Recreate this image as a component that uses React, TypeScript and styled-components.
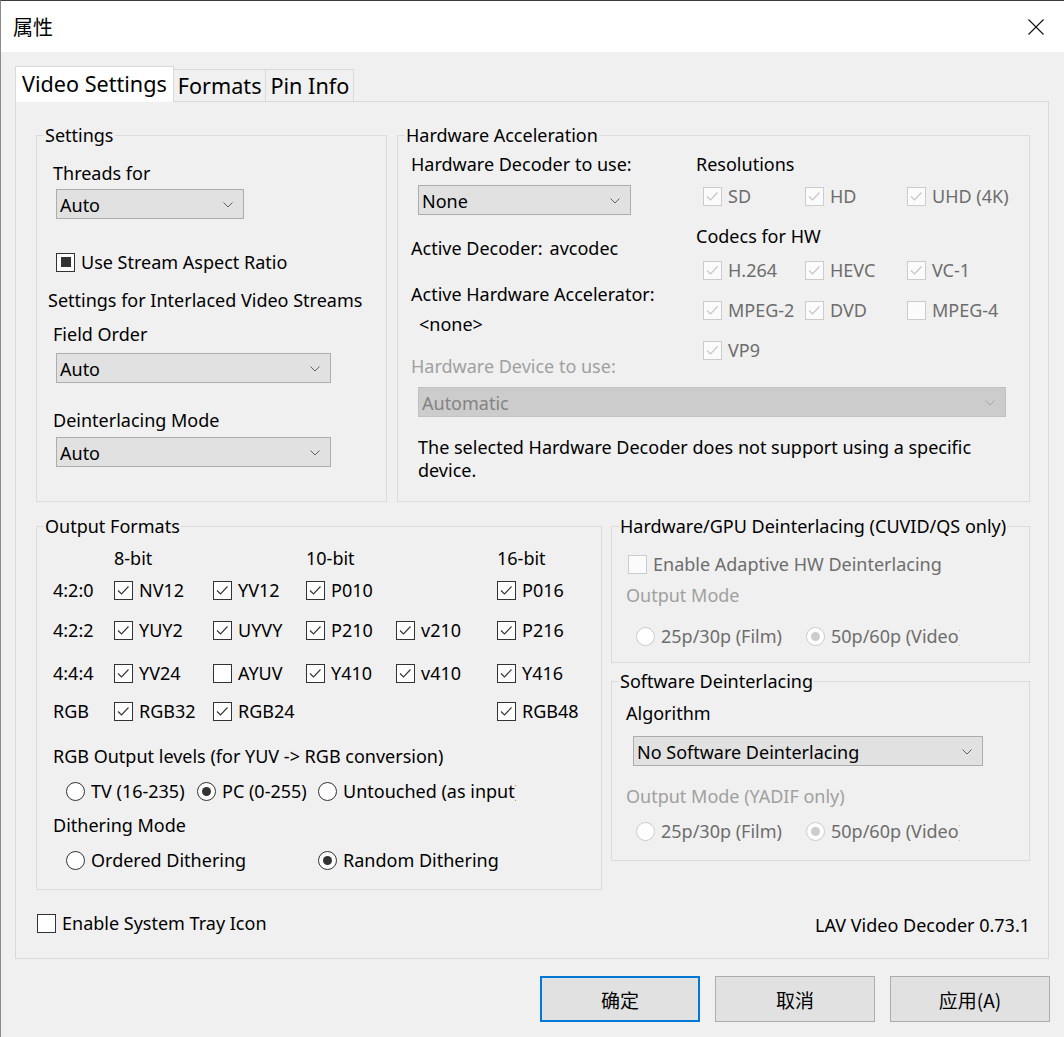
import React from "react";
import styled, { createGlobalStyle } from "styled-components";

const FONT = `"Noto Sans", "Noto Sans CJK SC", sans-serif`;
const CJK = `"Noto Sans CJK SC", "Noto Sans", sans-serif`;

const GlobalStyle = createGlobalStyle`
  * { box-sizing: border-box; }
  html, body { margin: 0; padding: 0; background: #f0f0f0; }
  body { font-family: ${FONT}; font-size: 18px; color: #000; }
`;

/* ---------- window chrome ---------- */
const Window = styled.div`
  width: 1064px;
  height: 1037px;
  display: flex;
  flex-direction: column;
  background: #f0f0f0;
  border-top: 1px solid #3c3c3c;
  border-left: 1px solid #8a8a8a;
  overflow: hidden;
`;

const TitleBar = styled.header`
  height: 51px;
  flex: none;
  background: #fff;
  display: flex;
  align-items: center;
  justify-content: space-between;
  padding: 0 20px 0 12px;
`;

const Title = styled.span`
  font-family: ${CJK};
  font-size: 20px;
  line-height: 24px;
`;

const Body = styled.div`
  flex: 1;
  display: flex;
  flex-direction: column;
  padding: 14px 14px 0 14px;
`;

/* ---------- tabs ---------- */
const TabStrip = styled.div`
  display: flex;
  align-items: flex-end;
  height: 36px;
  margin-bottom: -1px;
  position: relative;
  z-index: 1;
`;

const Tab = styled.div<{ $active?: boolean }>`
  display: flex;
  align-items: center;
  height: ${(p) => (p.$active ? 36 : 33)}px;
  padding: ${(p) => (p.$active ? "0 6px 3px" : "0 4px 1px")};
  margin-left: ${(p) => (p.$active ? 0 : -1)}px;
  font-size: 21.6px;
  background: ${(p) => (p.$active ? "#ffffff" : "#f0f0f0")};
  border: 1px solid #d9d9d9;
  border-bottom: ${(p) => (p.$active ? "none" : "1px solid #d9d9d9")};
  white-space: nowrap;
`;

const Panel = styled.div`
  width: 1034px;
  height: 858px;
  flex: none;
  border: 1px solid #d9d9d9;
  background: #f0f0f0;
  display: flex;
  flex-direction: column;
  padding: 21px 18px 0 20px;
`;

const Row = styled.div<{ $mt?: number; $gap: number }>`
  display: flex;
  align-items: flex-start;
  gap: ${(p) => p.$gap}px;
  margin-top: ${(p) => p.$mt ?? 0}px;
`;

const Column = styled.div<{ $gap: number }>`
  display: flex;
  flex-direction: column;
  gap: ${(p) => p.$gap}px;
`;

/* ---------- group boxes ---------- */
const GroupBox = styled.fieldset<{ $w: number; $h: number }>`
  width: ${(p) => p.$w}px;
  height: ${(p) => p.$h}px;
  flex: none;
  margin: 0;
  padding: 0;
  min-width: 0;
  border: 1px solid #dcdcdc;
  display: flex;
  flex-direction: column;
`;

const Legend = styled.legend`
  margin-left: 7px;
  padding: 0 1px;
  line-height: 24px;
  white-space: nowrap;
`;

const GroupBody = styled.div<{ $pl: number }>`
  display: flex;
  flex-direction: column;
  align-items: flex-start;
  padding-left: ${(p) => p.$pl}px;
`;

type Tone = "normal" | "muted" | "faint";
const toneColor = (t?: Tone) =>
  t === "muted" ? "#6d6d6d" : t === "faint" ? "#a0a0a0" : "#000000";

const Label = styled.div<{ $mt?: number; $ml?: number; $tone?: Tone }>`
  margin-top: ${(p) => p.$mt ?? 0}px;
  margin-left: ${(p) => p.$ml ?? 0}px;
  line-height: 24px;
  height: 24px;
  white-space: nowrap;
  color: ${(p) => toneColor(p.$tone)};
`;

const Pair = styled.div<{ $mt?: number }>`
  display: flex;
  gap: 7px;
  margin-top: ${(p) => p.$mt ?? 0}px;
  line-height: 24px;
  white-space: nowrap;
`;

const Paragraph = styled.p<{ $mt?: number; $ml?: number }>`
  margin: ${(p) => p.$mt ?? 0}px 0 0 ${(p) => p.$ml ?? 0}px;
  line-height: 23px;
`;

/* ---------- combo box ---------- */
const ComboFrame = styled.div<{ $w: number; $mt?: number; $ml?: number; $disabled?: boolean }>`
  width: ${(p) => p.$w}px;
  height: 30px;
  flex: none;
  margin-top: ${(p) => p.$mt ?? 0}px;
  margin-left: ${(p) => p.$ml ?? 0}px;
  display: flex;
  align-items: center;
  justify-content: space-between;
  padding: 1px 10px 0 3px;
  background: ${(p) => (p.$disabled ? "#cccccc" : "#e1e1e1")};
  border: 1px solid ${(p) => (p.$disabled ? "#c2c2c2" : "#adadad")};
  color: ${(p) => (p.$disabled ? "#838383" : "#000")};
  white-space: nowrap;
`;

function Combo(props: { value: string; w: number; mt?: number; ml?: number; disabled?: boolean }) {
  return (
    <ComboFrame $w={props.w} $mt={props.mt} $ml={props.ml} $disabled={props.disabled}>
      <span>{props.value}</span>
      <svg width="10" height="6" viewBox="0 0 10 6">
        <path
          d="M0.5 0.5 L5 5 L9.5 0.5"
          fill="none"
          stroke={props.disabled ? "#a9a9a9" : "#606060"}
          strokeWidth="1"
        />
      </svg>
    </ComboFrame>
  );
}

/* ---------- check box ---------- */
const CheckItem = styled.div<{ $mt?: number; $ml?: number; $disabled?: boolean }>`
  display: inline-flex;
  align-items: center;
  gap: 6px;
  height: 24px;
  margin-top: ${(p) => p.$mt ?? 0}px;
  margin-left: ${(p) => p.$ml ?? 0}px;
  white-space: nowrap;
  color: ${(p) => (p.$disabled ? "#6d6d6d" : "#000")};
`;

const Box = styled.span<{ $disabled?: boolean }>`
  width: 19px;
  height: 19px;
  flex: none;
  display: inline-flex;
  align-items: center;
  justify-content: center;
  background: ${(p) => (p.$disabled ? "#fbfbfb" : "#ffffff")};
  border: 1px solid ${(p) => (p.$disabled ? "#cccccc" : "#333333")};
`;

const MixedFill = styled.span`
  width: 10px;
  height: 10px;
  background: #333;
`;

type CheckState = "on" | "off" | "mixed";

function CheckBox(props: {
  label: string;
  state?: CheckState;
  disabled?: boolean;
  mt?: number;
  ml?: number;
}) {
  const state = props.state ?? "on";
  return (
    <CheckItem $mt={props.mt} $ml={props.ml} $disabled={props.disabled}>
      <Box $disabled={props.disabled}>
        {state === "on" && (
          <svg width="17" height="17" viewBox="0 0 17 17">
            <polyline
              points="3,8.5 6.5,12 13.5,4.5"
              fill="none"
              stroke={props.disabled ? "#c4c4c4" : "#333"}
              strokeWidth="1.1"
            />
          </svg>
        )}
        {state === "mixed" && <MixedFill />}
      </Box>
      {props.label}
    </CheckItem>
  );
}

/* ---------- radio ---------- */
const RadioItem = styled.div<{ $disabled?: boolean }>`
  display: inline-flex;
  align-items: center;
  gap: 6px;
  height: 24px;
  white-space: nowrap;
  color: ${(p) => (p.$disabled ? "#6d6d6d" : "#000")};
`;

const Circle = styled.span<{ $disabled?: boolean }>`
  width: 19px;
  height: 19px;
  flex: none;
  border-radius: 50%;
  display: inline-flex;
  align-items: center;
  justify-content: center;
  background: #fff;
  border: 1px solid ${(p) => (p.$disabled ? "#cccccc" : "#333333")};
`;

const Dot = styled.span<{ $disabled?: boolean }>`
  width: 9px;
  height: 9px;
  border-radius: 50%;
  background: ${(p) => (p.$disabled ? "#cccccc" : "#333333")};
`;

const ClipText = styled.span<{ $w?: number }>`
  display: inline-block;
  overflow: hidden;
  ${(p) => (p.$w ? `width: ${p.$w}px;` : "")}
`;

function Radio(props: { label: string; on?: boolean; disabled?: boolean; clip?: number }) {
  return (
    <RadioItem $disabled={props.disabled}>
      <Circle $disabled={props.disabled}>{props.on && <Dot $disabled={props.disabled} />}</Circle>
      <ClipText $w={props.clip}>{props.label}</ClipText>
    </RadioItem>
  );
}

const RadioRow = styled.div<{ $cols: string; $mt?: number; $ml?: number }>`
  display: grid;
  grid-template-columns: ${(p) => p.$cols};
  margin-top: ${(p) => p.$mt ?? 0}px;
  margin-left: ${(p) => p.$ml ?? 0}px;
`;

/* ---------- grids ---------- */
const HwGrid = styled.div`
  display: grid;
  grid-template-columns: 285px 1fr;
  align-self: stretch;
`;

const OptionGrid = styled.div<{ $mt?: number }>`
  display: grid;
  grid-template-columns: repeat(3, 102px);
  row-gap: 16px;
  margin-top: ${(p) => p.$mt ?? 0}px;
  padding-left: 7px;
`;

const FormatGrid = styled.div`
  margin-top: 8px;
  display: grid;
  grid-template-columns: 61px 99px 93px 90px 101px auto;
  grid-template-rows: 32px 40px 43px 38px 24px;
  align-items: start;
`;

const GridText = styled.span`
  line-height: 24px;
  white-space: nowrap;
`;

const BottomRow = styled.div`
  margin-top: 21px;
  height: 24px;
  display: flex;
  align-items: center;
  justify-content: space-between;
  padding-left: 1px;
`;

const Version = styled.span`
  line-height: 24px;
  margin-top: 3px;
  white-space: nowrap;
`;

const ButtonBar = styled.div`
  margin-top: 17px;
  display: flex;
  justify-content: flex-end;
  gap: 15px;
`;

const DialogButton = styled.button<{ $default?: boolean }>`
  width: 160px;
  height: 46px;
  padding: 0;
  background: #e1e1e1;
  border: ${(p) => (p.$default ? "2px solid #0078d7" : "1px solid #adadad")};
  font-family: ${CJK};
  font-size: 19px;
  color: #000;
`;

/* ---------- data ---------- */
type Fmt = [string, boolean] | null;
const formatRows: { label: string; items: Fmt[] }[] = [
  { label: "4:2:0", items: [["NV12", true], ["YV12", true], ["P010", true], null, ["P016", true]] },
  { label: "4:2:2", items: [["YUY2", true], ["UYVY", true], ["P210", true], ["v210", true], ["P216", true]] },
  { label: "4:4:4", items: [["YV24", true], ["AYUV", false], ["Y410", true], ["v410", true], ["Y416", true]] },
  { label: "RGB", items: [["RGB32", true], ["RGB24", true], null, null, ["RGB48", true]] },
];

const codecs: [string, boolean][] = [
  ["H.264", true],
  ["HEVC", true],
  ["VC-1", true],
  ["MPEG-2", true],
  ["DVD", true],
  ["MPEG-4", false],
  ["VP9", true],
];

export default function App() {
  return (
    <>
      <GlobalStyle />
      <Window>
        <TitleBar>
          <Title>属性</Title>
          <svg width="16" height="16" viewBox="0 0 16 16">
            <path d="M0.5 0.5 L15.5 15.5 M15.5 0.5 L0.5 15.5" stroke="#111" strokeWidth="1.1" />
          </svg>
        </TitleBar>
        <Body>
          <TabStrip>
            <Tab $active>Video Settings</Tab>
            <Tab>Formats</Tab>
            <Tab>Pin Info</Tab>
          </TabStrip>
          <Panel>
            <Row $gap={10}>
              <GroupBox $w={351} $h={379}>
                <Legend>Settings</Legend>
                <GroupBody $pl={16}>
                  <Label $mt={14}>Threads for</Label>
                  <Combo value="Auto" w={188} mt={4} ml={3} />
                  <CheckBox label="Use Stream Aspect Ratio" state="mixed" mt={31} ml={3} />
                  <Label $mt={14} $ml={-5}>Settings for Interlaced Video Streams</Label>
                  <Label $mt={10}>Field Order</Label>
                  <Combo value="Auto" w={275} mt={7} ml={3} />
                  <Label $mt={25}>Deinterlacing Mode</Label>
                  <Combo value="Auto" w={275} mt={5} ml={3} />
                </GroupBody>
              </GroupBox>

              <GroupBox $w={633} $h={379}>
                <Legend>Hardware Acceleration</Legend>
                <GroupBody $pl={13}>
                  <HwGrid>
                    <GroupBody $pl={0}>
                      <Label $mt={5}>Hardware Decoder to use:</Label>
                      <Combo value="None" w={213} mt={9} ml={7} />
                      <Pair $mt={21}>
                        <span>Active Decoder:</span>
                        <span>avcodec</span>
                      </Pair>
                      <Label $mt={22}>Active Hardware Accelerator:</Label>
                      <Label $mt={6} $ml={8}>&lt;none&gt;</Label>
                      <Label $mt={18} $tone="faint">Hardware Device to use:</Label>
                    </GroupBody>
                    <GroupBody $pl={0}>
                      <Label $mt={5}>Resolutions</Label>
                      <OptionGrid $mt={8}>
                        <CheckBox label="SD" disabled />
                        <CheckBox label="HD" disabled />
                        <CheckBox label="UHD (4K)" disabled />
                      </OptionGrid>
                      <Label $mt={16}>Codecs for HW</Label>
                      <OptionGrid $mt={10}>
                        {codecs.map(([name, on]) => (
                          <CheckBox key={name} label={name} state={on ? "on" : "off"} disabled />
                        ))}
                      </OptionGrid>
                    </GroupBody>
                  </HwGrid>
                  <Combo value="Automatic" w={588} mt={9} ml={7} disabled />
                  <Paragraph $mt={19} $ml={7}>
                    The selected Hardware Decoder does not support using a specific
                    <br />
                    device.
                  </Paragraph>
                </GroupBody>
              </GroupBox>
            </Row>

            <Row $gap={9} $mt={12}>
              <GroupBox $w={566} $h={376}>
                <Legend>Output Formats</Legend>
                <GroupBody $pl={16}>
                  <FormatGrid>
                    <span />
                    <GridText>8-bit</GridText>
                    <span />
                    <GridText>10-bit</GridText>
                    <span />
                    <GridText>16-bit</GridText>
                    {formatRows.map((r) => (
                      <React.Fragment key={r.label}>
                        <GridText>{r.label}</GridText>
                        {r.items.map((it, i) =>
                          it ? (
                            <CheckBox key={it[0]} label={it[0]} state={it[1] ? "on" : "off"} />
                          ) : (
                            <span key={`e${i}`} />
                          )
                        )}
                      </React.Fragment>
                    ))}
                  </FormatGrid>
                  <Label $mt={21}>RGB Output levels (for YUV -&gt; RGB conversion)</Label>
                  <RadioRow $cols="131px 121px auto" $mt={11} $ml={13}>
                    <Radio label="TV (16-235)" />
                    <Radio label="PC (0-255)" on />
                    <Radio label="Untouched (as input)" clip={173} />
                  </RadioRow>
                  <Label $mt={10}>Dithering Mode</Label>
                  <RadioRow $cols="252px auto" $mt={11} $ml={13}>
                    <Radio label="Ordered Dithering" />
                    <Radio label="Random Dithering" on />
                  </RadioRow>
                </GroupBody>
              </GroupBox>

              <Column $gap={6}>
                <GroupBox $w={419} $h={149}>
                  <Legend>Hardware/GPU Deinterlacing (CUVID/QS only)</Legend>
                  <GroupBody $pl={14}>
                    <CheckBox label="Enable Adaptive HW Deinterlacing" state="off" disabled mt={14} ml={2} />
                    <Label $mt={7} $tone="faint">Output Mode</Label>
                    <RadioRow $cols="170px auto" $mt={17} $ml={10}>
                      <Radio label="25p/30p (Film)" disabled clip={121} />
                      <Radio label="50p/60p (Video)" on disabled clip={129} />
                    </RadioRow>
                  </GroupBody>
                </GroupBox>
                <GroupBox $w={419} $h={192}>
                  <Legend>Software Deinterlacing</Legend>
                  <GroupBody $pl={14}>
                    <Label $mt={8}>Algorithm</Label>
                    <Combo value="No Software Deinterlacing" w={350} mt={11} ml={7} />
                    <Label $mt={18} $tone="faint">Output Mode (YADIF only)</Label>
                    <RadioRow $cols="170px auto" $mt={11} $ml={10}>
                      <Radio label="25p/30p (Film)" disabled clip={121} />
                      <Radio label="50p/60p (Video)" on disabled clip={129} />
                    </RadioRow>
                  </GroupBody>
                </GroupBox>
              </Column>
            </Row>

            <BottomRow>
              <CheckBox label="Enable System Tray Icon" state="off" />
              <Version>LAV Video Decoder 0.73.1</Version>
            </BottomRow>
          </Panel>
          <ButtonBar>
            <DialogButton $default>确定</DialogButton>
            <DialogButton>取消</DialogButton>
            <DialogButton>应用(A)</DialogButton>
          </ButtonBar>
        </Body>
      </Window>
    </>
  );
}
